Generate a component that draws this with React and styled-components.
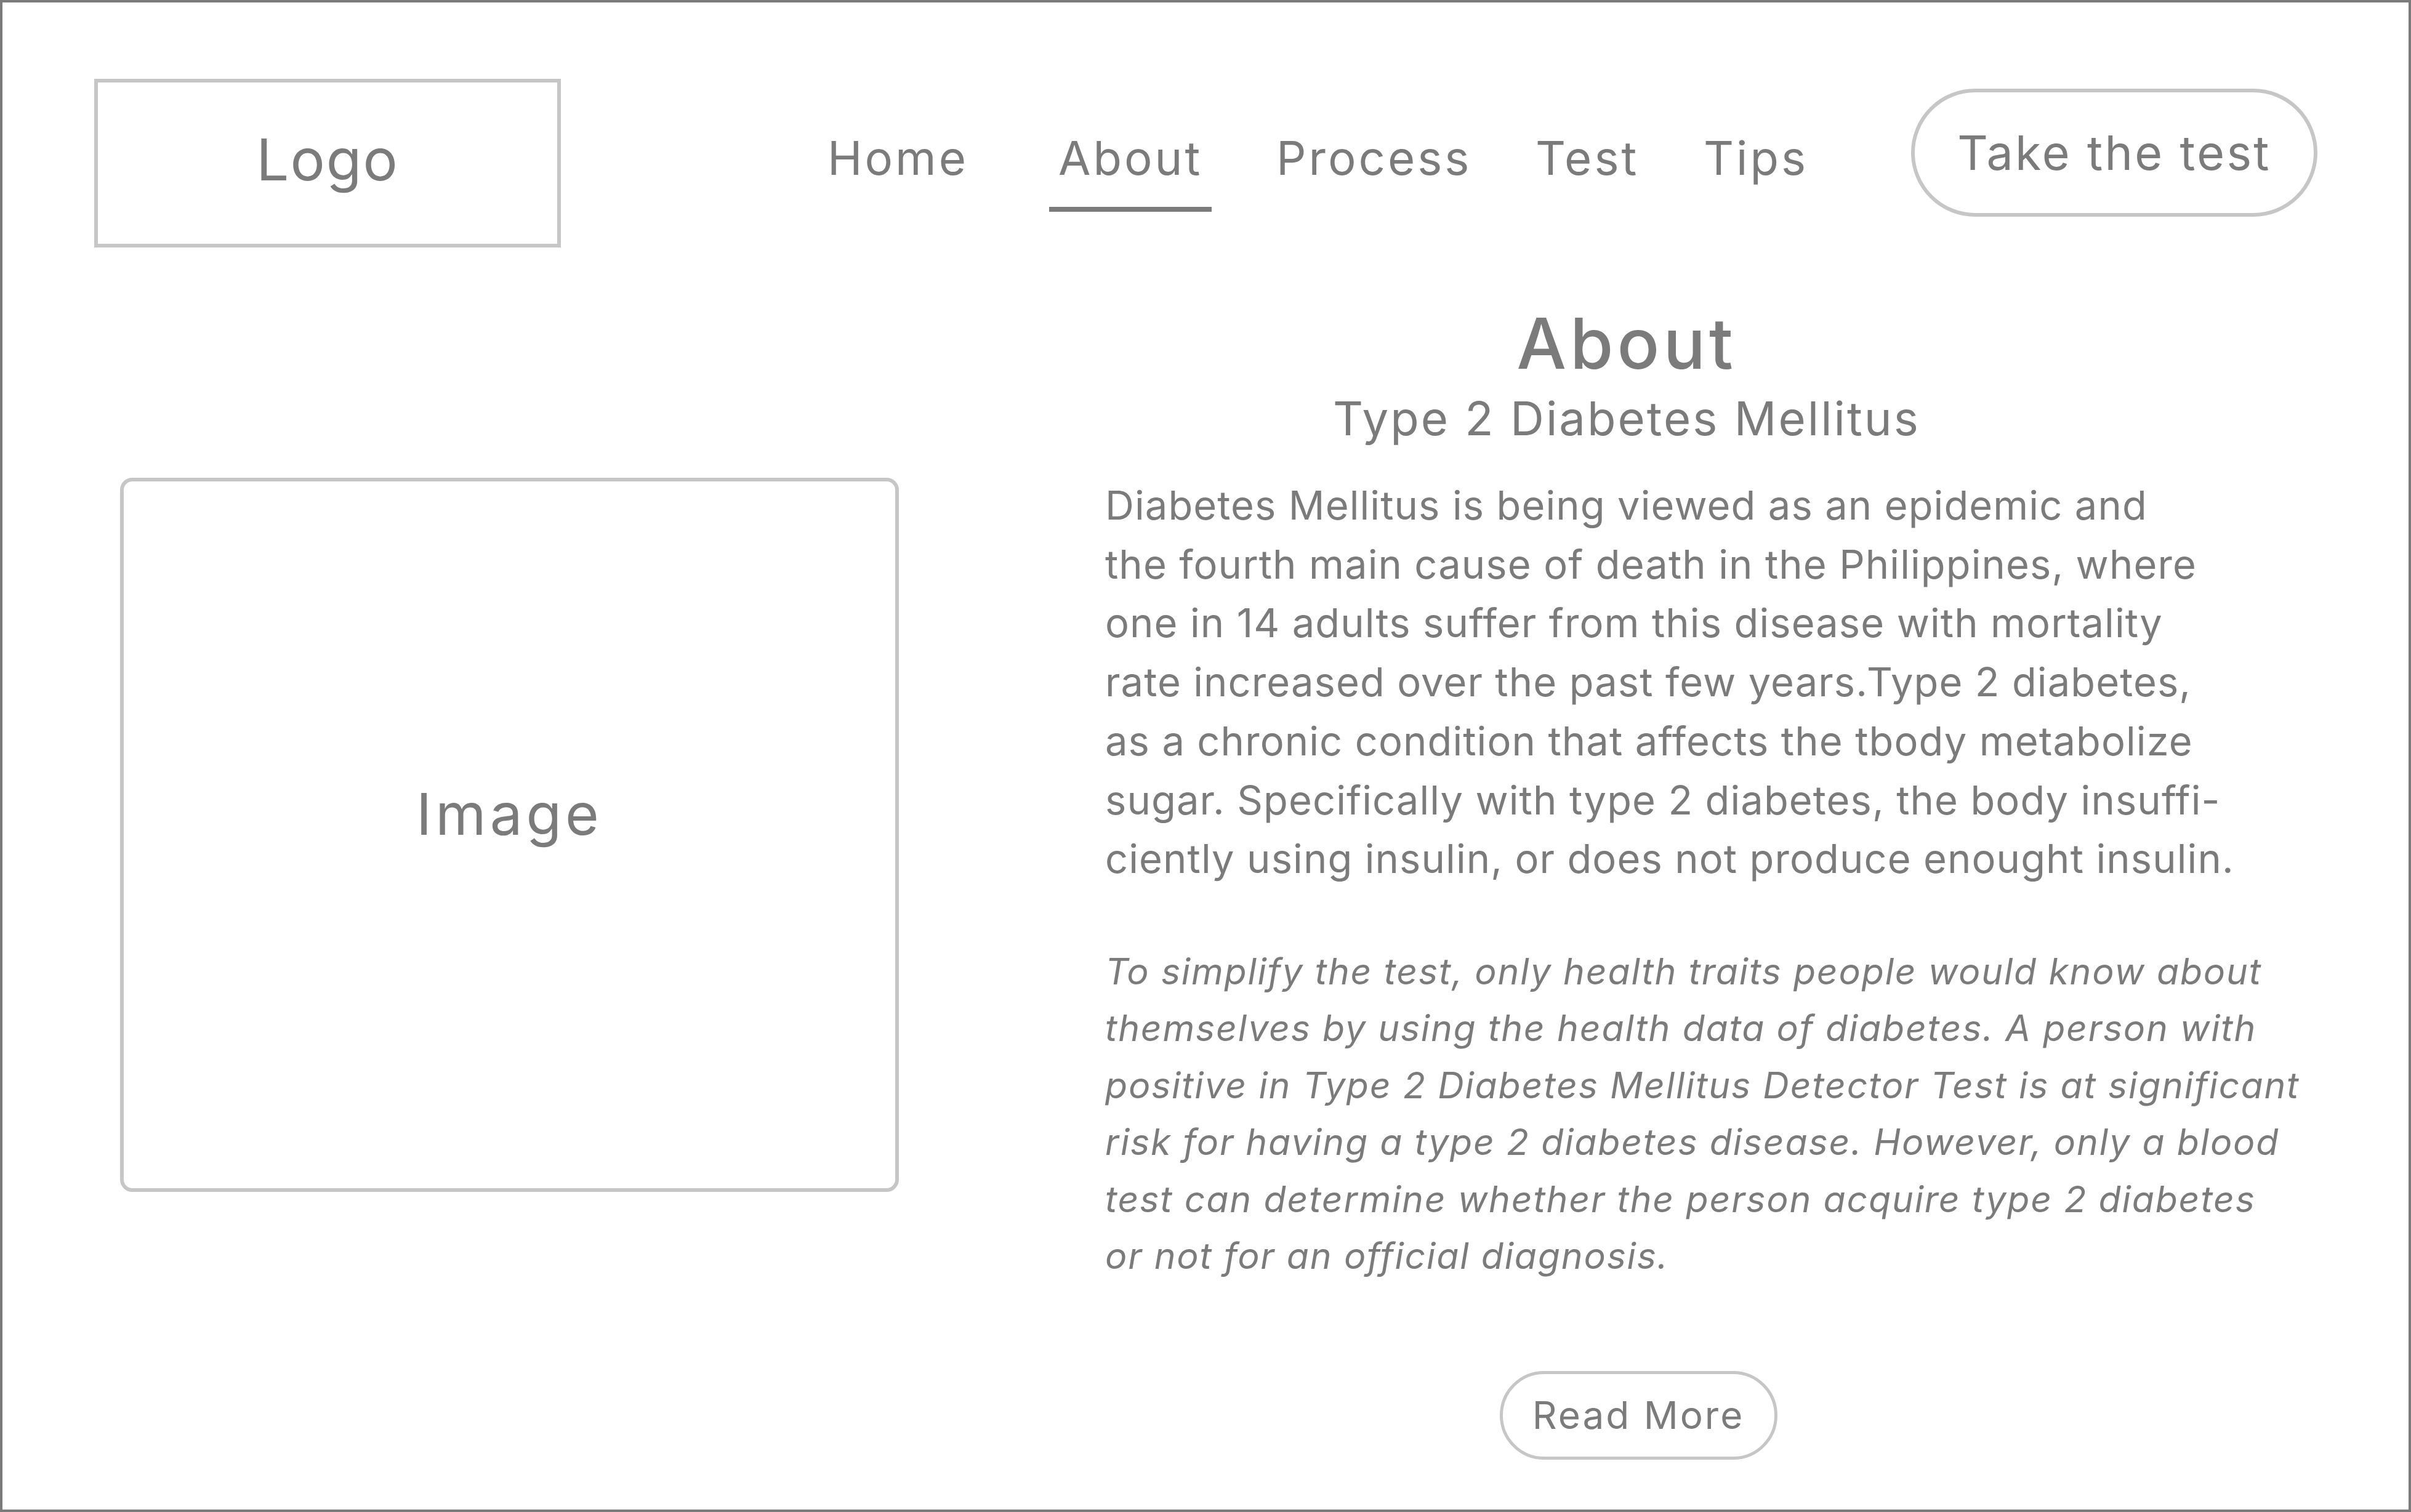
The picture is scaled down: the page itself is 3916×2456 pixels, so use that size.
import React from "react";
import styled, { createGlobalStyle } from "styled-components";

const GlobalStyle = createGlobalStyle`
  html, body {
    margin: 0;
    padding: 0;
    background: #ffffff;
  }
  body {
    font-family: Inter, "Open Sans", "Liberation Sans", sans-serif;
    color: #7b7b7b;
  }
`;

const Frame = styled.div`
  box-sizing: border-box;
  width: 3916px;
  height: 2456px;
  border: 4px solid #7b7b7b;
  background: #ffffff;
  overflow: hidden;
`;

const Header = styled.header`
  display: flex;
  align-items: flex-start;
  padding: 124px 0 0 149px;
`;

const LogoBox = styled.div`
  box-sizing: border-box;
  width: 758px;
  height: 274px;
  border: 6px solid #c6c6c6;
  display: flex;
  align-items: center;
  justify-content: center;
  padding-bottom: 12px;
  font-size: 94px;
  line-height: 1;
  letter-spacing: 2px;
`;

const Nav = styled.nav`
  display: grid;
  grid-template-columns: 360px 369px 421px 273px 337px;
  margin-left: 433px;
  margin-top: 90px;
`;

const NavLink = styled.a`
  justify-self: start;
  font-size: 76px;
  line-height: 1;
  letter-spacing: 4px;
  padding: 0 ${(p) => (p.$active ? "15px" : "0")} 42px;
  border-bottom: 8px solid ${(p) => (p.$active ? "#7b7b7b" : "transparent")};
  color: inherit;
  text-decoration: none;
  white-space: nowrap;
`;

const PillButton = styled.button`
  box-sizing: border-box;
  width: ${(p) => p.$w}px;
  height: ${(p) => p.$h}px;
  border: ${(p) => p.$bw}px solid #c6c6c6;
  border-radius: ${(p) => p.$h / 2}px;
  background: transparent;
  display: flex;
  align-items: center;
  justify-content: center;
  padding: 0;
  font-family: inherit;
  font-size: ${(p) => p.$fs}px;
  line-height: 1;
  letter-spacing: ${(p) => p.$ls}px;
  color: inherit;
  white-space: nowrap;
  margin-top: ${(p) => p.$mt || 0}px;
`;

const Main = styled.main`
  display: flex;
  align-items: flex-start;
  padding-left: 191px;
`;

const ImageBox = styled.div`
  box-sizing: border-box;
  flex: none;
  width: 1265px;
  height: 1160px;
  margin-top: 374px;
  border: 6px solid #c6c6c6;
  border-radius: 20px;
  display: flex;
  align-items: center;
  justify-content: center;
  padding-bottom: 68px;
  font-size: 94px;
  line-height: 1;
  letter-spacing: 6px;
`;

const Content = styled.section`
  display: flex;
  flex-direction: column;
  margin-left: 335px;
  margin-top: 99px;
`;

const TitleBlock = styled.div`
  width: 1694px;
  text-align: center;
`;

const Title = styled.h1`
  margin: 0;
  font-size: 114px;
  font-weight: 500;
  line-height: 1;
  letter-spacing: 6px;
`;

const Subtitle = styled.h2`
  margin: 26px 0 0;
  font-size: 76px;
  font-weight: 400;
  line-height: 1;
  letter-spacing: 3px;
`;

const Paragraph = styled.p`
  margin: ${(p) => p.$mt}px 0 0;
  font-size: ${(p) => p.$fs}px;
  line-height: ${(p) => p.$lh}px;
  font-style: ${(p) => (p.$italic ? "italic" : "normal")};
  letter-spacing: ${(p) => p.$ls}px;
`;

const Line = styled.span`
  display: block;
  white-space: nowrap;
`;

const ButtonRow = styled.div`
  width: 1732px;
  display: flex;
  justify-content: center;
  margin-top: 141px;
`;

const navItems = [
  { label: "Home" },
  { label: "About", active: true },
  { label: "Process" },
  { label: "Test" },
  { label: "Tips" },
];

const bodyLines = [
  "Diabetes Mellitus is being viewed as an epidemic and",
  "the fourth main cause of death in the Philippines, where",
  "one in 14 adults suffer from this disease with mortality",
  "rate increased over the past few years.Type 2 diabetes,",
  "as a chronic condition that affects the tbody metabolize",
  "sugar. Specifically with type 2 diabetes, the body insuffi-",
  "ciently using insulin, or does not produce enought insulin.",
];

const italicLines = [
  "To simplify the test, only health traits people would know about",
  "themselves by using the health data of diabetes. A person with",
  "positive in Type 2 Diabetes Mellitus Detector Test is at significant",
  "risk for having a type 2 diabetes disease. However, only a blood",
  "test can determine whether the person acquire type 2 diabetes",
  "or not for an official diagnosis.",
];

export default function App() {
  return (
    <>
      <GlobalStyle />
      <Frame>
        <Header>
          <LogoBox>Logo</LogoBox>
          <Nav>
            {navItems.map((item) => (
              <NavLink key={item.label} href="#" $active={item.active}>
                {item.label}
              </NavLink>
            ))}
          </Nav>
          <PillButton $w={660} $h={208} $bw={6} $fs={77} $ls={3.3} $mt={16}>
            Take the test
          </PillButton>
        </Header>
        <Main>
          <ImageBox>Image</ImageBox>
          <Content>
            <TitleBlock>
              <Title>About</Title>
              <Subtitle>Type 2 Diabetes Mellitus</Subtitle>
            </TitleBlock>
            <Paragraph $mt={56} $fs={65} $lh={95.7} $ls={1.1}>
              {bodyLines.map((l) => (
                <Line key={l}>{l}</Line>
              ))}
            </Paragraph>
            <Paragraph $mt={89} $fs={59} $lh={92.4} $ls={1.8} $italic>
              {italicLines.map((l) => (
                <Line key={l}>{l}</Line>
              ))}
            </Paragraph>
            <ButtonRow>
              <PillButton $w={451} $h={144} $bw={5} $fs={62} $ls={3}>
                Read More
              </PillButton>
            </ButtonRow>
          </Content>
        </Main>
      </Frame>
    </>
  );
}
